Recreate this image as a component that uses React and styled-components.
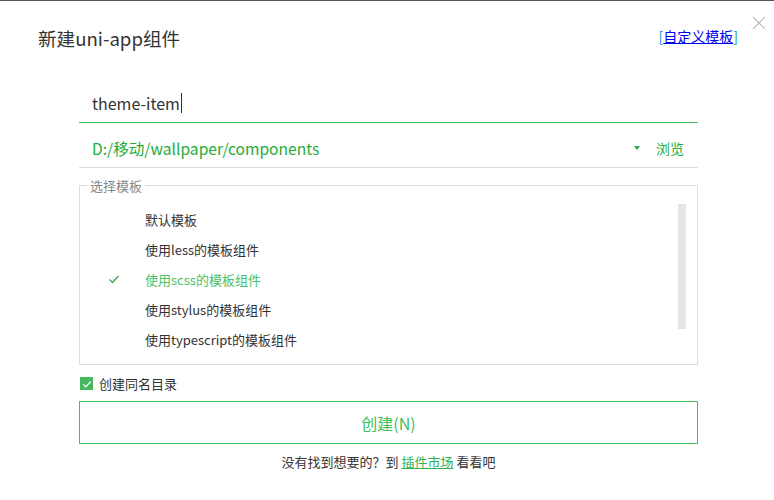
import React, { useState } from 'react'
import styled, { createGlobalStyle } from 'styled-components'

const GlobalStyle = createGlobalStyle`
  html, body {
    margin: 0;
    padding: 0;
    background: #fff;
    font-family: "Noto Sans CJK SC", "Noto Sans", sans-serif;
  }
`

const green = '#3fc25b'
const greenText = '#1fad3a'

let Dialog = styled.div`
  width: 774px;
  height: 500px;
  box-sizing: border-box;
  border-top: 1px solid #555;
  position: relative;
  background: #fff;
  overflow: hidden;
`

let Header = styled.div`
  display: flex;
  justify-content: space-between;
  align-items: center;
  padding: 21px 36px 0 38px;
  height: 30px;
`

let Title = styled.div`
  font-size: 18.6px;
  color: #333;
`

let CustomLink = styled.a`
  font-size: 14px;
  color: #0000ee;
  text-decoration: underline;
  cursor: pointer;
  margin-top: -3px;
`

let Bracket = styled.span`
  color: #1a8fd6;
  text-decoration: none;
  display: inline-block;
`

let Close = styled.div`
  position: absolute;
  top: 10px;
  right: 8px;
  width: 14px;
  height: 14px;
  cursor: pointer;
`

let Body = styled.div`
  margin: 0 76px 0 79px;
  padding-top: 31px;
  display: flex;
  flex-direction: column;
`

let InputRow = styled.div`
  display: flex;
  align-items: center;
  height: 40px;
  box-sizing: border-box;
  border-bottom: 1px solid ${p => (p.$active ? green : '#ddd')};
  padding-left: 13px;
  padding-right: 14px;
  margin-bottom: ${p => p.$gap || 0}px;
`

let InputText = styled.div`
  flex: 1;
  font-size: ${p => (p.$green ? 15.6 : 16)}px;
  color: ${p => (p.$green ? greenText : '#333')};
  display: flex;
  align-items: center;
`

let Caret = styled.span`
  display: inline-block;
  width: 1px;
  height: 20px;
  background: #333;
  margin-left: 1px;
`

let Arrow = styled.span`
  width: 0;
  height: 0;
  border-left: 3px solid transparent;
  border-right: 3px solid transparent;
  border-top: 4px solid #2aa64a;
  margin-right: 16px;
`

let Browse = styled.span`
  font-size: 14px;
  color: ${greenText};
  cursor: pointer;
`

let Fieldset = styled.fieldset`
  margin: 11px 0 0 0;
  padding: 0;
  border: 1px solid #ddd;
  height: 186px;
  box-sizing: border-box;
  position: relative;
`

let Legend = styled.legend`
  font-size: 13px;
  color: #888;
  padding: 0 3px;
  margin-left: 7px;
  line-height: 13px;
`

let ListWrap = styled.div`
  display: flex;
  padding-top: 12px;
`

let List = styled.ul`
  list-style: none;
  margin: 0;
  padding: 0;
  flex: 1;
`

let Item = styled.li`
  height: 30px;
  display: flex;
  align-items: center;
  font-size: 13px;
  color: ${p => (p.$selected ? '#4cc265' : '#333')};
  cursor: pointer;
`

let CheckCol = styled.span`
  width: 65px;
  display: flex;
  justify-content: flex-end;
  padding-right: 25px;
  box-sizing: border-box;
`

let Scrollbar = styled.div`
  width: 8px;
  height: 125px;
  background: #e5e5e5;
  margin: 0 11px 0 0;
`

let CheckRow = styled.label`
  display: flex;
  align-items: center;
  gap: 6px;
  margin-top: 9px;
  font-size: 13px;
  color: #333;
  cursor: pointer;
`

let Box = styled.span`
  width: 13px;
  height: 13px;
  background: #48b85f;
  display: flex;
  align-items: center;
  justify-content: center;
  margin-left: 1px;
`

let CreateButton = styled.button`
  appearance: none;
  margin-top: 8px;
  height: 43px;
  border: none;
  box-shadow: inset 0 0 0 1px #3fc25b;
  background: #fff;
  color: #3fc25b;
  font-size: 16px;
  font-family: inherit;
  cursor: pointer;
`

let Footer = styled.div`
  text-align: center;
  font-size: 13px;
  color: #333;
  margin-top: 8px;
`

let MarketLink = styled.a`
  color: #2fb24c;
  text-decoration: underline;
  cursor: pointer;
`

const templates = [
  '默认模板',
  '使用less的模板组件',
  '使用scss的模板组件',
  '使用stylus的模板组件',
  '使用typescript的模板组件',
]

function Tick({ color, size = 12 }) {
  return (
    <svg width={size} height={size} viewBox="0 0 12 12">
      <path d="M1.5 6.5 L4.5 9.5 L10.5 3" fill="none" stroke={color} strokeWidth="1.4" />
    </svg>
  )
}

export default function App() {
  const [selected, setSelected] = useState(2)
  const [sameDir, setSameDir] = useState(true)

  return (
    <Dialog>
      <GlobalStyle />
      <Header>
        <Title>新建uni-app组件</Title>
        <CustomLink>
          <Bracket>[</Bracket>自定义模板<Bracket>]</Bracket>
        </CustomLink>
      </Header>
      <Close>
        <svg width="14" height="14" viewBox="0 0 14 14">
          <path d="M1 1 L13 13 M13 1 L1 13" stroke="#bbb" strokeWidth="1.2" />
        </svg>
      </Close>
      <Body>
        <InputRow $active $gap={5}>
          <InputText>
            theme-item<Caret />
          </InputText>
        </InputRow>
        <InputRow>
          <InputText $green>D:/移动/wallpaper/components</InputText>
          <Arrow />
          <Browse>浏览</Browse>
        </InputRow>
        <Fieldset>
          <Legend>选择模板</Legend>
          <ListWrap>
            <List>
              {templates.map((t, i) => (
                <Item key={t} $selected={i === selected} onClick={() => setSelected(i)}>
                  <CheckCol>{i === selected && <Tick color="#3aa858" />}</CheckCol>
                  {t}
                </Item>
              ))}
            </List>
            <Scrollbar />
          </ListWrap>
        </Fieldset>
        <CheckRow onClick={() => setSameDir(!sameDir)}>
          <Box>{sameDir && <Tick color="#fff" size={10} />}</Box>
          创建同名目录
        </CheckRow>
        <CreateButton>创建(N)</CreateButton>
        <Footer>
          没有找到想要的？到 <MarketLink>插件市场</MarketLink> 看看吧
        </Footer>
      </Body>
    </Dialog>
  )
}
